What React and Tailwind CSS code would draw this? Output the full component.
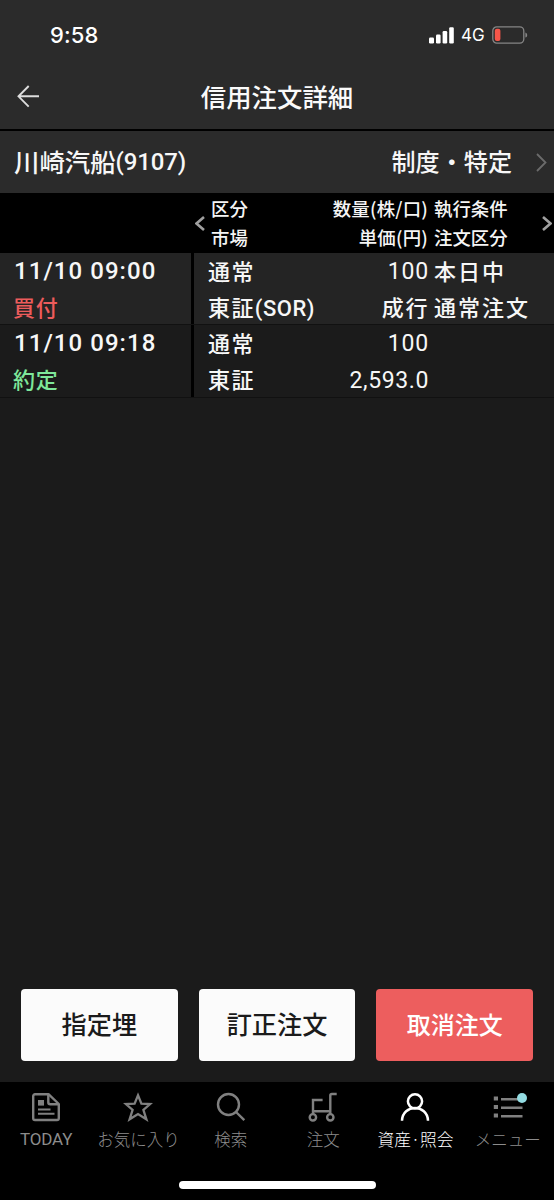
import React from "react";

const jp = "font-['Noto_Sans_CJK_JP',sans-serif]";
const num = "font-['Roboto','Noto_Sans_CJK_JP',sans-serif]";

function StatusBar() {
  return (
    <div className="flex h-[70px] items-center justify-between pl-[50px] pr-[26px]">
      <span className="font-['Inter',sans-serif] text-[22px] font-medium leading-none tracking-[0.1px] text-white">9:58</span>
      <div className="flex items-center">
        <svg width="26" height="17" viewBox="0 0 26 17" fill="#fff">
          <rect x="0" y="10.5" width="5" height="6" rx="1.2" />
          <rect x="7" y="7.5" width="4.6" height="9" rx="1.2" />
          <rect x="13.6" y="4" width="4.6" height="12.5" rx="1.2" />
          <rect x="20.2" y="0.3" width="4.6" height="16.2" rx="1.2" />
        </svg>
        <span className="ml-[6px] w-[31px] pt-px font-['Inter',sans-serif] text-[17px] leading-none tracking-[-0.1px] text-white">4G</span>
        <svg width="36" height="18" viewBox="0 0 36 18" fill="none">
          <rect x="0.8" y="0.9" width="31" height="16.2" rx="4" stroke="#858585" strokeWidth="1.3" />
          <rect x="2.8" y="2.8" width="5.6" height="12.2" rx="2" fill="#f65549" />
          <path d="M33.4 6.4c2.4.8 2.4 4.4 0 5.2z" fill="#858585" />
        </svg>
      </div>
    </div>
  );
}

function Chevron({ left, className, width = 9, height = 18, stroke = 2 }) {
  return (
    <svg className={className} width={width} height={height} viewBox={`0 0 ${width} ${height}`} fill="none" stroke="currentColor" strokeWidth={stroke}>
      <path d={left ? `M${width - 1} 1L1.5 ${height / 2}L${width - 1} ${height - 1}` : `M1 1L${width - 1.5} ${height / 2}L1 ${height - 1}`} />
    </svg>
  );
}

function OrderRow({ time, status, statusClass, kind, market, qty, price, priceClass, cond, type, rowClass }) {
  return (
    <div className={`flex border-b border-[#111111] text-[22px] text-[#f7f7f7] ${rowClass}`}>
      <div className="w-[194px] shrink-0 border-r-[3px] border-black pl-[13px]">
        <div className={`${num} h-[36px] whitespace-nowrap pl-px text-[24px] font-medium leading-[36px] tracking-[1.05px]`}>{time}</div>
        <div className={`${jp} h-[36px] font-medium leading-[34px] tracking-[0.8px] ${statusClass}`}>{status}</div>
      </div>
      <div className={`${jp} w-[120px] shrink-0 whitespace-nowrap pl-[14px] font-medium leading-[34px] tracking-[1.4px]`}>
        <div className="h-[36px]">{kind}</div>
        <div className="h-[36px]">{market}</div>
      </div>
      <div className="w-[115px] shrink-0 text-right">
        <div className={`${num} h-[36px] text-[23px] leading-[38px] tracking-[0.8px]`}>{qty}</div>
        <div className={`h-[36px] ${priceClass}`}>{price}</div>
      </div>
      <div className={`${jp} whitespace-nowrap pl-[5px] font-medium leading-[34px] tracking-[2px]`}>
        <div className="h-[36px]">{cond}</div>
        <div className="h-[36px]">{type}</div>
      </div>
    </div>
  );
}

const icons = {
  today: (
    <svg width="30" height="30" viewBox="0 0 30 30" fill="none" stroke="currentColor" strokeWidth="2.4">
      <path d="M4 2.2H17.5L27.8 12V26.2A1.8 1.8 0 0 1 26 28H4A1.8 1.8 0 0 1 2.2 26.2V4A1.8 1.8 0 0 1 4 2.2Z" strokeLinejoin="round" />
      <path d="M17.3 2.5V10.2A2 2 0 0 0 19.3 12.2H27.5" />
      <rect x="7" y="8" width="6" height="5.6" fill="currentColor" stroke="none" />
      <path d="M7 17.6H19.5M7 21.8H23.5" strokeWidth="2" />
    </svg>
  ),
  star: (
    <svg width="30" height="30" viewBox="0 0 30 30" fill="none" stroke="currentColor" strokeWidth="2.3">
      <path d="M15 3.2L18.4 11.6L27.2 12L20.4 17.8L23.4 27.3L15 22L6.6 27.3L9.6 17.8L2.8 12L11.6 11.6Z" />
    </svg>
  ),
  search: (
    <svg width="30" height="30" viewBox="0 0 30 30" fill="none" stroke="currentColor" strokeWidth="2.4">
      <circle cx="12.5" cy="12.5" r="10.5" />
      <path d="M20 20L28.3 28.2" />
    </svg>
  ),
  cart: (
    <svg width="30" height="30" viewBox="0 0 30 30" fill="none" stroke="currentColor" strokeWidth="2.4">
      <circle cx="4.9" cy="25.3" r="3.2" />
      <circle cx="22.3" cy="25.3" r="3.2" />
      <path d="M5 22V8H14.6M5 19.3H22.3M22.3 22V3.6A1.6 1.6 0 0 1 23.9 2H28.7" />
    </svg>
  ),
  person: (
    <svg width="30" height="30" viewBox="0 0 30 30" fill="none" stroke="currentColor" strokeWidth="2.5">
      <circle cx="15" cy="9.3" r="7.1" />
      <path d="M2 28.8C2.4 11.8 27.6 11.8 28 28.8" />
    </svg>
  ),
  menu: (
    <svg width="30" height="30" viewBox="0 0 30 30" fill="none" stroke="currentColor" strokeWidth="2.4">
      <path d="M8 7.2H29.5M8 15.7H29.5M8 24.2H29.5" />
      <path d="M.8 6.5H5M.8 15H5M.8 23.5H5" strokeWidth="4.2" />
    </svg>
  ),
};

const cjkLabel = "font-['Noto_Sans_CJK_JP',sans-serif] text-[16.5px] font-light";

const tabs = [
  { id: "today", label: "TODAY", font: "font-['Roboto',sans-serif] text-[17px] tracking-[-0.2px]" },
  { id: "star", label: "お気に入り", font: cjkLabel },
  { id: "search", label: "検索", font: cjkLabel },
  { id: "cart", label: "注文", font: cjkLabel },
  { id: "person", label: "資産·照会", active: true, font: "font-['Noto_Sans_CJK_JP',sans-serif] text-[16.8px] font-light" },
  { id: "menu", label: "メニュー", font: cjkLabel },
];

function TabBar() {
  return (
    <nav className="flex h-[118px] flex-col items-center bg-black">
      <div className="grid h-[99px] w-full grid-cols-6">
        {tabs.map((t) => (
          <div key={t.id} className={`flex flex-col items-center pt-[10px] ${t.active ? "text-white" : "text-[#8c8c8c]"}`}>
            <div className={`relative h-[30px] ${t.active ? "" : "text-[#808080]"}`}>
              {icons[t.id]}
              {t.id === "menu" && <span className="absolute -right-[4px] top-[1px] size-[10px] rounded-full bg-[#93dce2]" />}
            </div>
            <span className={`mt-[5px] whitespace-nowrap leading-[24px] ${t.font}`}>{t.label}</span>
          </div>
        ))}
      </div>
      <div className="h-[8px] w-[197px] rounded-full bg-white" />
    </nav>
  );
}

export default function App() {
  return (
    <div className="flex h-[1200px] w-[554px] flex-col overflow-hidden bg-[#1b1b1b]">
      <header className="h-[131px] border-b-2 border-black bg-[#2b2b2b]">
        <StatusBar />
        <div className="grid h-[52px] grid-cols-[100px_1fr_100px] items-center">
          <svg className="ml-[17px] text-[#dddddd]" width="23" height="23" viewBox="0 0 23 23" fill="none" stroke="currentColor" strokeWidth="1.9">
            <path d="M11.7 1L1.5 11.3L11.7 21.6M1.5 11.3H22" />
          </svg>
          <h1 className={`${jp} text-center text-[25.4px] font-medium leading-[52px] text-[#fafafa]`}>信用注文詳細</h1>
        </div>
      </header>

      <div className="flex h-[62px] items-center bg-[#2b2b2b] pl-[14px] pr-[7px] font-medium text-[#f7f7f7]">
        <div className="flex items-center text-[25.4px] leading-[58px]">
          <span className={`${jp} -mt-[3px]`}>川崎汽船</span>
          <span className={`${num} text-[24px] tracking-[-0.15px]`}>(9107)</span>
        </div>
        <span className={`${jp} -mt-[3px] ml-auto text-[24.1px] leading-[60px]`}>制度・特定</span>
        <Chevron className="ml-[24px] text-[#6b6b6b]" width={11} height={19} stroke={1.8} />
      </div>

      <div className={`${jp} flex h-[60px] items-center bg-black pr-[2px] text-[18.4px] font-medium leading-[29px] text-[#f5f5f5]`}>
        <Chevron left className="ml-[195px] text-[#a0a0a0]" width={10} height={15} stroke={2.6} />
        <div className="w-[100px] pl-[6px]">
          <div>区分</div>
          <div>市場</div>
        </div>
        <div className="w-[123px] whitespace-nowrap text-right tracking-[0.2px]">
          <div>数量(株/口)</div>
          <div>単価(円)</div>
        </div>
        <div className="whitespace-nowrap pl-[6px]">
          <div>執行条件</div>
          <div>注文区分</div>
        </div>
        <Chevron className="ml-auto text-[#a0a0a0]" width={10} height={15} stroke={2.6} />
      </div>

      <OrderRow
        time="11/10 09:00" status="買付" statusClass="text-[#ec5c5c]" kind="通常"
        market={<>東証<span className="font-['Roboto',sans-serif] tracking-[0.5px]">(SOR)</span></>}
        qty="100" price="成行" priceClass="font-['Noto_Sans_CJK_JP',sans-serif] font-medium leading-[34px] tracking-[1.6px]"
        cond="本日中" type="通常注文" rowClass="h-[72px] bg-[#242424]"
      />
      <OrderRow
        time="11/10 09:18" status="約定" statusClass="text-[#7ee79a]" kind="通常" market="東証"
        qty="100" price="2,593.0" priceClass="font-['Roboto',sans-serif] text-[23px] leading-[39px] tracking-[0.6px]"
        rowClass="h-[73px] bg-[#1b1b1b]"
      />

      <main className="flex-1" />

      <div className={`${jp} flex h-[93px] gap-[21px] px-[21px] text-[25.2px] font-medium leading-none`}>
        <button className="h-[72px] flex-1 rounded-[4px] bg-[#fbfbfb] pb-[3px] text-[#1b1b1b]">指定埋</button>
        <button className="h-[72px] flex-1 rounded-[4px] bg-[#fbfbfb] pb-[3px] text-[#1b1b1b]">訂正注文</button>
        <button className="h-[72px] flex-1 rounded-[4px] bg-[#ed5e5e] pb-[3px] text-[24px] text-white">取消注文</button>
      </div>

      <TabBar />
    </div>
  );
}
